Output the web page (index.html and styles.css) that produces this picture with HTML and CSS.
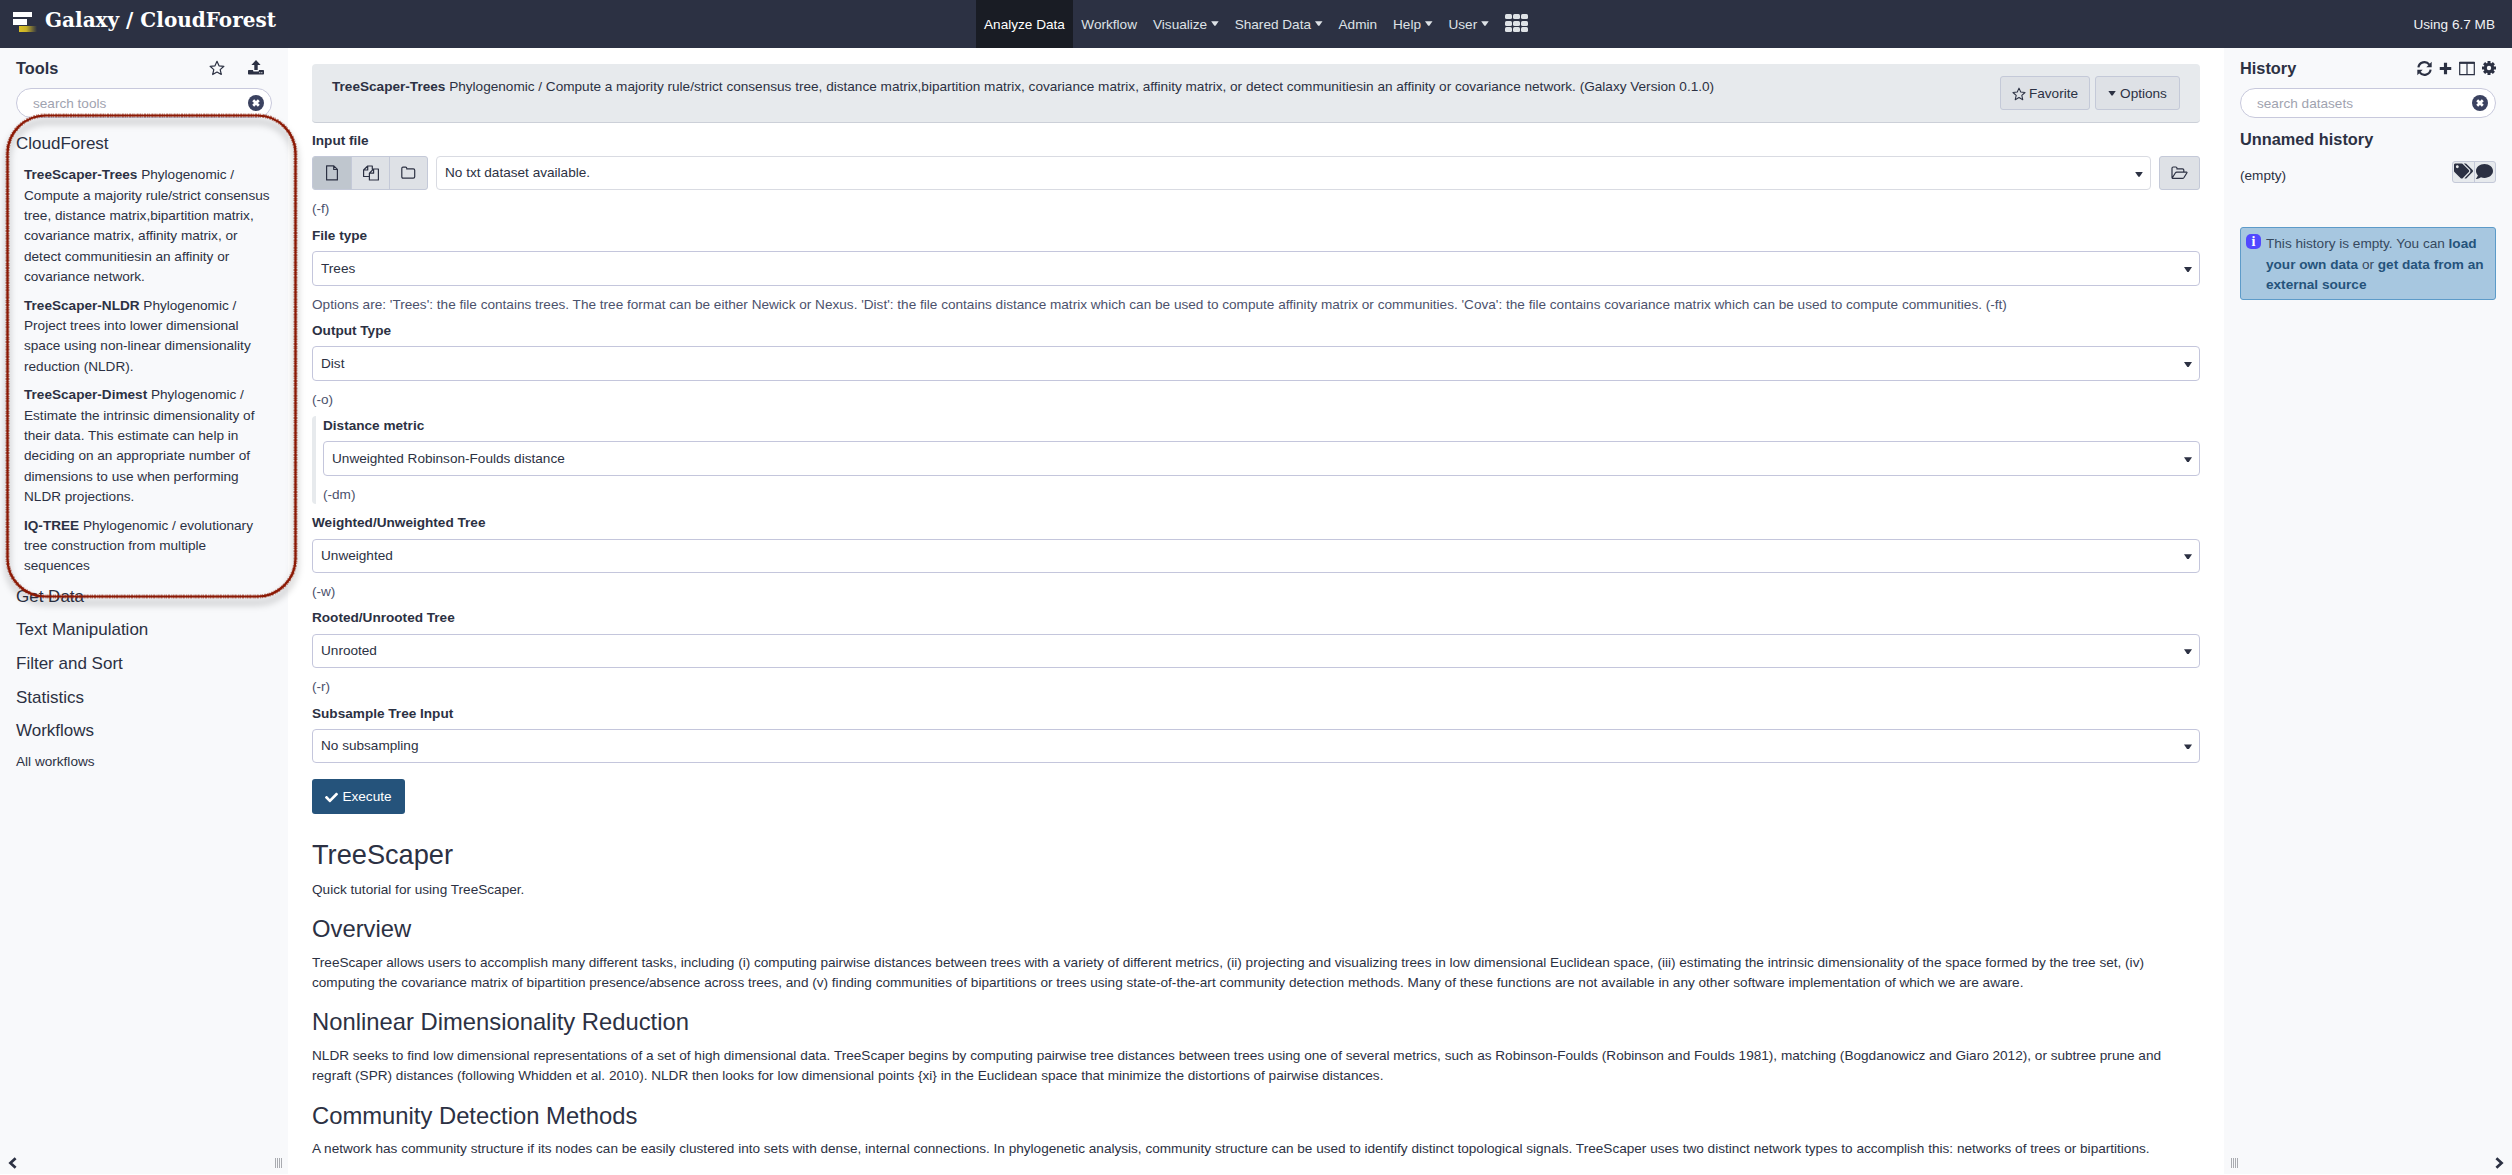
FILE: index.html
```html
<!DOCTYPE html>
<html lang="en">
<head>
<meta charset="utf-8">
<title>Galaxy / CloudForest</title>
<link rel="stylesheet" href="styles.css">
</head>
<body>
<svg class="defs" aria-hidden="true">
  <symbol id="star" viewBox="0 0 16 16"><path d="M8 1.300l2 4.500 4.900.5-3.700 3.300 1.100 4.900L8 12l-4.300 2.500 1.100-4.900L1.100 6.300l4.900-.5z" fill="none" stroke="currentColor" stroke-width="1.200" stroke-linejoin="round"/></symbol>
  <symbol id="upload" viewBox="0 0 16 15"><path d="M8 0l4.600 4.900H9.700V10H6.300V4.900H3.400zM.8 10h4.300v.8q0 .6.7.6h4.400q.7 0 .7-.6V10h4.300q.8 0 .8.8v2.900q0 .8-.8.8H.8q-.8 0-.8-.8v-2.900q0-.8.8-.8z" fill="currentColor"/><path d="M11.300 12.700h1M13.300 12.700h1" stroke="#f8f9fb" stroke-width="1"/></symbol>
  <symbol id="clear" viewBox="0 0 16 16"><circle cx="8" cy="8" r="8" fill="#3b4260"/><path d="M5.200 5.200l5.600 5.600M10.800 5.200l-5.600 5.600" stroke="#fff" stroke-width="2.700"/></symbol>
  <symbol id="file" viewBox="0 0 14 16"><path d="M1.600.8h7.200L12.400 4.400v10.500H1.600zM8.700.8v3.700h3.700" fill="none" stroke="currentColor" stroke-width="1.200" stroke-linejoin="round"/></symbol>
  <symbol id="files" viewBox="0 0 16 16"><path d="M6.400 11.500H.6V5L4.700 1h4.600v3M4.700 1v4H.6M6.400 8.200L10.600 4h4.800v11H6.400zM10.600 4v4.200H6.400M9.300 1v3.500" fill="none" stroke="currentColor" stroke-width="1.200" stroke-linejoin="round"/></symbol>
  <symbol id="folder" viewBox="0 0 15 14"><path d="M.8 2.500Q.8 1.200 2 1.200h2.600q1.200 0 1.200 1.300v.4h6.500q1.400 0 1.400 1.300v6.600q0 1.300-1.400 1.300H2Q.8 12.100.8 10.800z" fill="none" stroke="currentColor" stroke-width="1.200"/></symbol>
  <symbol id="folderopen" viewBox="0 0 17 14"><path d="M1 11.200V2.300Q1 1 2.300 1h2.400Q6 1 6 2.300v.5h5.500q1.300 0 1.300 1.300v2M1.200 12L4.300 7q.6-.9 1.500-.9h9.700q.8 0 .3.900L13 11.500q-.6.900-1.600.9H2q-1 0-1-1.200" fill="none" stroke="currentColor" stroke-width="1.200"/></symbol>
  <symbol id="check" viewBox="0 0 512 512"><path fill="currentColor" d="M173.898 439.404l-166.400-166.400c-9.997-9.997-9.997-26.206 0-36.204l36.203-36.204c9.997-9.998 26.207-9.998 36.204 0L192 312.690 432.095 72.596c9.997-9.997 26.207-9.997 36.204 0l36.203 36.204c9.997 9.997 9.997 26.206 0 36.204l-294.400 294.401c-9.998 9.997-26.207 9.997-36.204-.001z"/></symbol>
  <symbol id="refresh" viewBox="0 0 14 14"><path d="M1.300 6A5.700 5.700 0 0 1 11.500 3.400M12.700 8A5.700 5.700 0 0 1 2.500 10.600" fill="none" stroke="currentColor" stroke-width="2"/><path d="M13.700.8v5H8.700zM.3 13.200v-5h5z" fill="currentColor"/></symbol>
  <symbol id="plus" viewBox="0 0 14 14"><path d="M7 .8v12.400M.8 7h12.400" stroke="currentColor" stroke-width="3.400"/></symbol>
  <symbol id="columns" viewBox="0 0 16 14"><path d="M.7 1h14.600v12.200H.7zM8 1v12" fill="none" stroke="currentColor" stroke-width="1.200"/><path d="M.5 1.300h15" stroke="currentColor" stroke-width="2.200"/></symbol>
  <symbol id="cog" viewBox="0 0 14 14"><g stroke="currentColor" stroke-width="3"><path d="M7 0v14M0 7h14M2.100 2.100l9.800 9.800M11.900 2.100l-9.800 9.800"/></g><circle cx="7" cy="7" r="5.200" fill="currentColor"/><circle cx="7" cy="7" r="2.200" fill="#f8f9fb"/></symbol>
  <symbol id="tags" viewBox="0 0 640 512"><path fill="currentColor" d="M497.941 225.941L286.059 14.059A48 48 0 0 0 252.118 0H48C21.490 0 0 21.490 0 48v204.118a48 48 0 0 0 14.059 33.941l211.882 211.882c18.744 18.745 49.136 18.746 67.882 0l204.118-204.118c18.745-18.745 18.745-49.137 0-67.882zM112 160c-26.510 0-48-21.490-48-48s21.490-48 48-48 48 21.490 48 48-21.490 48-48 48zm513.941 133.823L421.823 497.941c-18.745 18.745-49.137 18.745-67.882 0l-.36-.36L527.640 323.522c16.999-16.999 26.360-39.600 26.360-63.640s-9.362-46.641-26.360-63.640L331.397 0h48.721a48 48 0 0 1 33.941 14.059l211.882 211.882c18.745 18.745 18.745 49.137 0 67.882z"/></symbol>
  <symbol id="comment" viewBox="0 0 512 512"><path fill="currentColor" d="M256 32C114.600 32 0 125.100 0 240c0 49.600 21.400 95 57 130.700C44.500 421.100 2.700 466 2.200 466.500c-2.200 2.300-2.800 5.700-1.500 8.700S4.800 480 8 480c66.300 0 116-31.800 140.600-51.400 32.700 12.300 69 19.400 107.400 19.400 141.400 0 256-93.100 256-208S397.400 32 256 32z"/></symbol>
  <symbol id="chevron" viewBox="0 0 9 12"><path d="M7.600 1.200L2.400 6l5.200 4.800" fill="none" stroke="currentColor" stroke-width="2.700"/></symbol>
</svg>

<header class="masthead">
  <div class="brand">
    <svg class="logo" width="26" height="22" viewBox="0 0 26 22">
      <defs><linearGradient id="gold"><stop offset="0" stop-color="#dcc224"/><stop offset=".4" stop-color="#c8b128"/><stop offset="1" stop-color="#c8b128" stop-opacity="0"/></linearGradient></defs>
      <path d="M1 1h19v5H1zM1 8h14v6H1z" fill="#fff"/><path d="M7 15h18v6H7z" fill="url(#gold)"/>
    </svg>
    <span class="brand-name">Galaxy / CloudForest</span>
  </div>
  <nav class="menu">
    <a class="item active">Analyze Data</a>
    <a class="item">Workflow</a>
    <a class="item">Visualize<i class="caret"></i></a>
    <a class="item">Shared Data<i class="caret"></i></a>
    <a class="item">Admin</a>
    <a class="item">Help<i class="caret"></i></a>
    <a class="item">User<i class="caret"></i></a>
    <a class="item grid-item"><span class="grid"><b></b><b></b><b></b><b></b><b></b><b></b><b></b><b></b><b></b></span></a>
  </nav>
  <div class="quota">Using 6.7 MB</div>
</header>

<div class="columns">
  <aside class="panel left">
    <div class="panel-head"><span class="title">Tools</span>
      <span class="left-icons"><svg width="16" height="16"><use href="#star"/></svg><svg width="16" height="15"><use href="#upload"/></svg></span>
    </div>
    <div class="search"><span>search tools</span><svg width="16" height="16"><use href="#clear"/></svg></div>
    <div class="section first">CloudForest</div>
    <div class="tools">
      <p><b>TreeScaper-Trees</b> Phylogenomic / Compute a majority rule/strict consensus tree, distance matrix,bipartition matrix, covariance matrix, affinity matrix, or detect communitiesin an affinity or covariance network.</p>
      <p><b>TreeScaper-NLDR</b> Phylogenomic / Project trees into lower dimensional space using non-linear dimensionality reduction (NLDR).</p>
      <p><b>TreeScaper-Dimest</b> Phylogenomic / Estimate the intrinsic dimensionality of their data. This estimate can help in deciding on an appropriate number of dimensions to use when performing NLDR projections.</p>
      <p><b>IQ-TREE</b> Phylogenomic / evolutionary tree construction from multiple sequences</p>
    </div>
    <div class="section">Get Data</div>
    <div class="section">Text Manipulation</div>
    <div class="section">Filter and Sort</div>
    <div class="section">Statistics</div>
    <div class="section">Workflows</div>
    <div class="all">All workflows</div>
    <div class="panel-foot"><svg width="9" height="12"><use href="#chevron"/></svg><i class="grip"></i></div>
    <svg class="annotation" width="320" height="520" viewBox="0 0 320 520">
      <rect class="ink-shadow" x="7.500" y="15.500" width="288" height="481" rx="38"/>
      <rect class="ink" x="7.500" y="15.500" width="288" height="481" rx="38"/>
      <rect class="ink-rough" x="7.500" y="15.500" width="288" height="481" rx="38"/>
    </svg>
  </aside>

  <main class="center">
    <div class="tool-card">
      <div class="tool-title"><b>TreeScaper-Trees</b> Phylogenomic / Compute a majority rule/strict consensus tree, distance matrix,bipartition matrix, covariance matrix, affinity matrix, or detect communitiesin an affinity or covariance network. (Galaxy Version 0.1.0)</div>
      <div class="tool-buttons"><span class="btn fav"><svg width="14" height="14"><use href="#star"/></svg>Favorite</span><span class="btn opt"><i class="caret"></i>Options</span></div>
    </div>

    <div class="row"><label>Input file</label>
      <div class="data-row">
        <div class="group"><span class="on"><svg width="14" height="16"><use href="#file"/></svg></span><span><svg width="16" height="16"><use href="#files"/></svg></span><span><svg width="15" height="14"><use href="#folder"/></svg></span></div>
        <div class="select pale"><span>No txt dataset available.</span><i class="caret"></i></div>
        <span class="btn browse"><svg width="17" height="14"><use href="#folderopen"/></svg></span>
      </div>
      <div class="help">(-f)</div></div>
    <div class="row"><label>File type</label><div class="select"><span>Trees</span><i class="caret"></i></div><div class="help">Options are: 'Trees': the file contains trees. The tree format can be either Newick or Nexus. 'Dist': the file contains distance matrix which can be used to compute affinity matrix or communities. 'Cova': the file contains covariance matrix which can be used to compute communities. (-ft)</div></div>
    <div class="row"><label>Output Type</label><div class="select"><span>Dist</span><i class="caret"></i></div><div class="help">(-o)</div></div>
    <div class="nested"><div class="row"><label>Distance metric</label><div class="select"><span>Unweighted Robinson-Foulds distance</span><i class="caret"></i></div><div class="help">(-dm)</div></div></div>
    <div class="row"><label>Weighted/Unweighted Tree</label><div class="select"><span>Unweighted</span><i class="caret"></i></div><div class="help">(-w)</div></div>
    <div class="row"><label>Rooted/Unrooted Tree</label><div class="select"><span>Unrooted</span><i class="caret"></i></div><div class="help">(-r)</div></div>
    <div class="row last"><label>Subsample Tree Input</label><div class="select"><span>No subsampling</span><i class="caret"></i></div></div>
    <button class="execute"><svg width="13" height="13"><use href="#check"/></svg>Execute</button>

    <article class="docs">
      <h1>TreeScaper</h1>
      <p>Quick tutorial for using TreeScaper.</p>
      <h2>Overview</h2>
      <p>TreeScaper allows users to accomplish many different tasks, including (i) computing pairwise distances between trees with a variety of different metrics, (ii) projecting and visualizing trees in low dimensional Euclidean space, (iii) estimating the intrinsic dimensionality of the space formed by the tree set, (iv) computing the covariance matrix of bipartition presence/absence across trees, and (v) finding communities of bipartitions or trees using state-of-the-art community detection methods. Many of these functions are not available in any other software implementation of which we are aware.</p>
      <h2>Nonlinear Dimensionality Reduction</h2>
      <p>NLDR seeks to find low dimensional representations of a set of high dimensional data. TreeScaper begins by computing pairwise tree distances between trees using one of several metrics, such as Robinson-Foulds (Robinson and Foulds 1981), matching (Bogdanowicz and Giaro 2012), or subtree prune and regraft (SPR) distances (following Whidden et al. 2010). NLDR then looks for low dimensional points {xi} in the Euclidean space that minimize the distortions of pairwise distances.</p>
      <h2>Community Detection Methods</h2>
      <p>A network has community structure if its nodes can be easily clustered into sets with dense, internal connections. In phylogenetic analysis, community structure can be used to identify distinct topological signals. TreeScaper uses two distinct network types to accomplish this: networks of trees or bipartitions.</p>
    </article>
  </main>

  <aside class="panel right">
    <div class="panel-head"><span class="title">History</span>
      <span class="right-icons"><svg width="15" height="15"><use href="#refresh"/></svg><svg width="13" height="13"><use href="#plus"/></svg><svg width="16" height="15"><use href="#columns"/></svg><svg width="14" height="14"><use href="#cog"/></svg></span>
    </div>
    <div class="search"><span>search datasets</span><svg width="16" height="16"><use href="#clear"/></svg></div>
    <div class="history-name">Unnamed history</div>
    <div class="history-meta"><span>(empty)</span><span class="mini"><b><svg width="19" height="16"><use href="#tags"/></svg></b><b><svg width="17" height="17"><use href="#comment"/></svg></b></span></div>
    <div class="info"><span class="badge">i</span>This history is empty. You can <b>load your own data</b> or <b>get data from an external source</b></div>
    <div class="panel-foot"><i class="grip"></i><svg class="flip" width="9" height="12"><use href="#chevron"/></svg></div>
  </aside>
</div>
</body>
</html>
```
FILE: styles.css
```css
* { box-sizing: border-box; }
html, body { height: 100%; overflow: hidden; }
body { margin: 0; font: 13.605px/20.400px "Liberation Sans", Arial, sans-serif; color: #2c3143; background: #fff; display: flex; flex-direction: column; }
p, h1, h2 { margin: 0; font-weight: 400; }
svg { display: block; flex: none; }
.defs { position: absolute; width: 0; height: 0; }
.caret { display: block; width: 8px; height: 5px; background: currentColor; clip-path: polygon(0 0, 100% 0, 58% 100%, 42% 100%); flex: none; }

.masthead { height: 48px; flex: none; background: #2c3143; display: grid; grid-template-columns: 976px auto 1fr; color: #dee2e6; }
.brand { display: flex; padding-left: 12px; }
.logo { margin-top: 11px; }
.brand-name { font: bold 20px/40px "DejaVu Serif", serif; color: #fff; margin-left: 7px; }
.menu { display: flex; }
.item { display: flex; align-items: center; padding: 2px 8px 0; }
.item .caret { margin: -3px 0 0 4px; width: 7.500px; height: 4.500px; }
.active { background: #191c24; color: #fff; padding-right: 8.500px; }
.grid-item { align-items: flex-start; padding-top: 14px; padding-left: 8px; }
.grid { display: grid; grid-template-columns: repeat(3, 6.800px); grid-auto-rows: 5px; gap: 1.500px; }
.grid b { background: #dee2e6; border-radius: 1.500px; }
.quota { text-align: right; padding: 15px 17px 0 0; color: #f0f2f4; }

.columns { flex: 1; min-height: 0; display: grid; grid-template-columns: 288px 1fr 288px; padding-bottom: 1px; }
.panel { background: #f8f9fb; position: relative; display: flex; flex-direction: column; padding: 0 16px; }
.panel-head { display: flex; justify-content: space-between; align-items: center; height: 40px; }
.title, .history-name { font-size: 16.320px; font-weight: bold; }
.left-icons { display: flex; gap: 23px; padding-right: 8px; }
.right-icons { display: flex; gap: 7px; align-items: center; }
.search { height: 30px; border: 1px solid #c8c9dc; border-radius: 15px; background: #fff; display: flex; align-items: center; justify-content: space-between; padding: 0 7px 0 16px; color: #9fa3b0; }
.search span { padding-top: 2px; }
.section { font-size: 17px; line-height: 20.400px; margin-bottom: 13.200px; }
.first { margin: 16px 0 10.700px; }
.tools { padding: 0 0 0 8px; width: 256px; }
.tools p { margin-bottom: 8px; }
.tools + .section { margin-top: 2px; }
.all { margin-top: -2.500px; }
.panel-foot { margin-top: auto; display: flex; align-items: center; justify-content: space-between; height: 23px; margin-left: -8px; margin-right: -10px; }
.right .panel-foot { margin-left: -9px; margin-right: -8px; }
.grip { width: 7px; height: 10px; background: repeating-linear-gradient(90deg, #a9abb0 0 1px, transparent 1px 2px); }
.flip { transform: scaleX(-1); }
.annotation { position: absolute; left: 0; top: 52px; z-index: 2; pointer-events: none; }
.annotation rect { fill: none; }
.ink { stroke: #8c1a05; stroke-width: 2.200; }
.ink-rough { stroke: #8c1a05; stroke-opacity: .55; stroke-width: 4; stroke-dasharray: 1 1.300 2 1 1.400 .7; }
.ink-shadow { stroke: #000; stroke-opacity: .14; stroke-width: 7; transform: translateY(6px); filter: blur(3px); }

.center { padding: 16px 24px 0; overflow: hidden; }
.tool-card { height: 59px; background: #e7eaed; border-bottom: 1px solid #ccd0d8; border-radius: 4px; padding: 12px 20px; display: flex; justify-content: space-between; }
.tool-title { padding-top: 1px; }
.tool-buttons { display: flex; gap: 5px; }
.btn { height: 34px; border: 1px solid #c4c9d8; background: #dee1e6; border-radius: 3px; display: flex; align-items: center; justify-content: center; gap: 3px; padding-top: 2px; }
.btn .caret { margin-right: 1px; margin-top: -2px; }
.fav { width: 90px; }
.opt { width: 85px; }
.row { padding-top: 6.400px; height: 95.100px; }
label { display: block; font-weight: bold; }
.tool-card + .row { margin-top: 1.600px; }
.select { height: 34.400px; border: 1px solid #c4c6dc; border-radius: 4px; margin-top: 4.800px; padding: 1px 7px 0 8px; display: flex; align-items: center; justify-content: space-between; }
.select .caret { margin-top: 1px; }
.pale { border-color: #d9dbe2; }
.help { margin-top: 8.900px; color: #4c526c; }
.data-row { display: flex; margin-top: 4.600px; height: 34.400px; }
.data-row .select { flex: 1; margin: 0 8px; }
.browse { width: 41px; height: auto; padding-top: 0; }
.group { display: flex; width: 116px; border: 1px solid #c4c9d8; border-radius: 3px; background: #dee1e6; overflow: hidden; }
.group span { flex: 1; display: flex; align-items: center; justify-content: center; border-left: 1px solid #c4c9d8; }
.group .on { background: #bfc6ce; border-left: 0; padding-right: 1px; }
.nested { border-left: 4px solid #e7eaed; border-radius: 4px; padding-left: 7px; height: 88px; margin: 6.400px 0 2.700px; }
.nested .row { padding-top: 0; height: 88px; }
.last { height: 82px; }
.execute { display: flex; align-items: center; justify-content: center; gap: 4px; width: 93px; height: 35px; border: 0; border-radius: 3px; background: #25537b; color: #fff; font: inherit; padding: 2px 0 0; }
.docs h1 { font-size: 27.200px; line-height: 33px; margin: 24px 0 8.600px; }
.docs h2 { font-size: 23.800px; line-height: 28.500px; margin: 15px 0 9px; }

.history-name { margin-top: 11px; }
.history-meta { display: flex; justify-content: space-between; margin-top: 12px; height: 30px; align-items: flex-end; padding-bottom: 5px; }
.mini { display: flex; width: 44px; height: 22px; border: 1px solid #c4c9d8; border-radius: 3px; background: #e7eaed; align-self: flex-start; }
.mini b { flex: 1; display: flex; align-items: center; justify-content: center; padding-bottom: 2px; }
.mini b + b { border-left: 1px solid #c4c9d8; }
.info { position: relative; margin-top: 36px; height: 73px; border: 1px solid #5d9bc9; border-radius: 3px; background: #a7c7e0; padding: 6px 8px 0 25px; color: #36495e; }
.info b { color: #25537b; }
.badge { position: absolute; left: 5px; top: 6px; width: 15px; height: 15px; border-radius: 5px; background: #5148ff; color: #fff; font: bold 14px/15px "Liberation Serif", serif; text-align: center; }
```
